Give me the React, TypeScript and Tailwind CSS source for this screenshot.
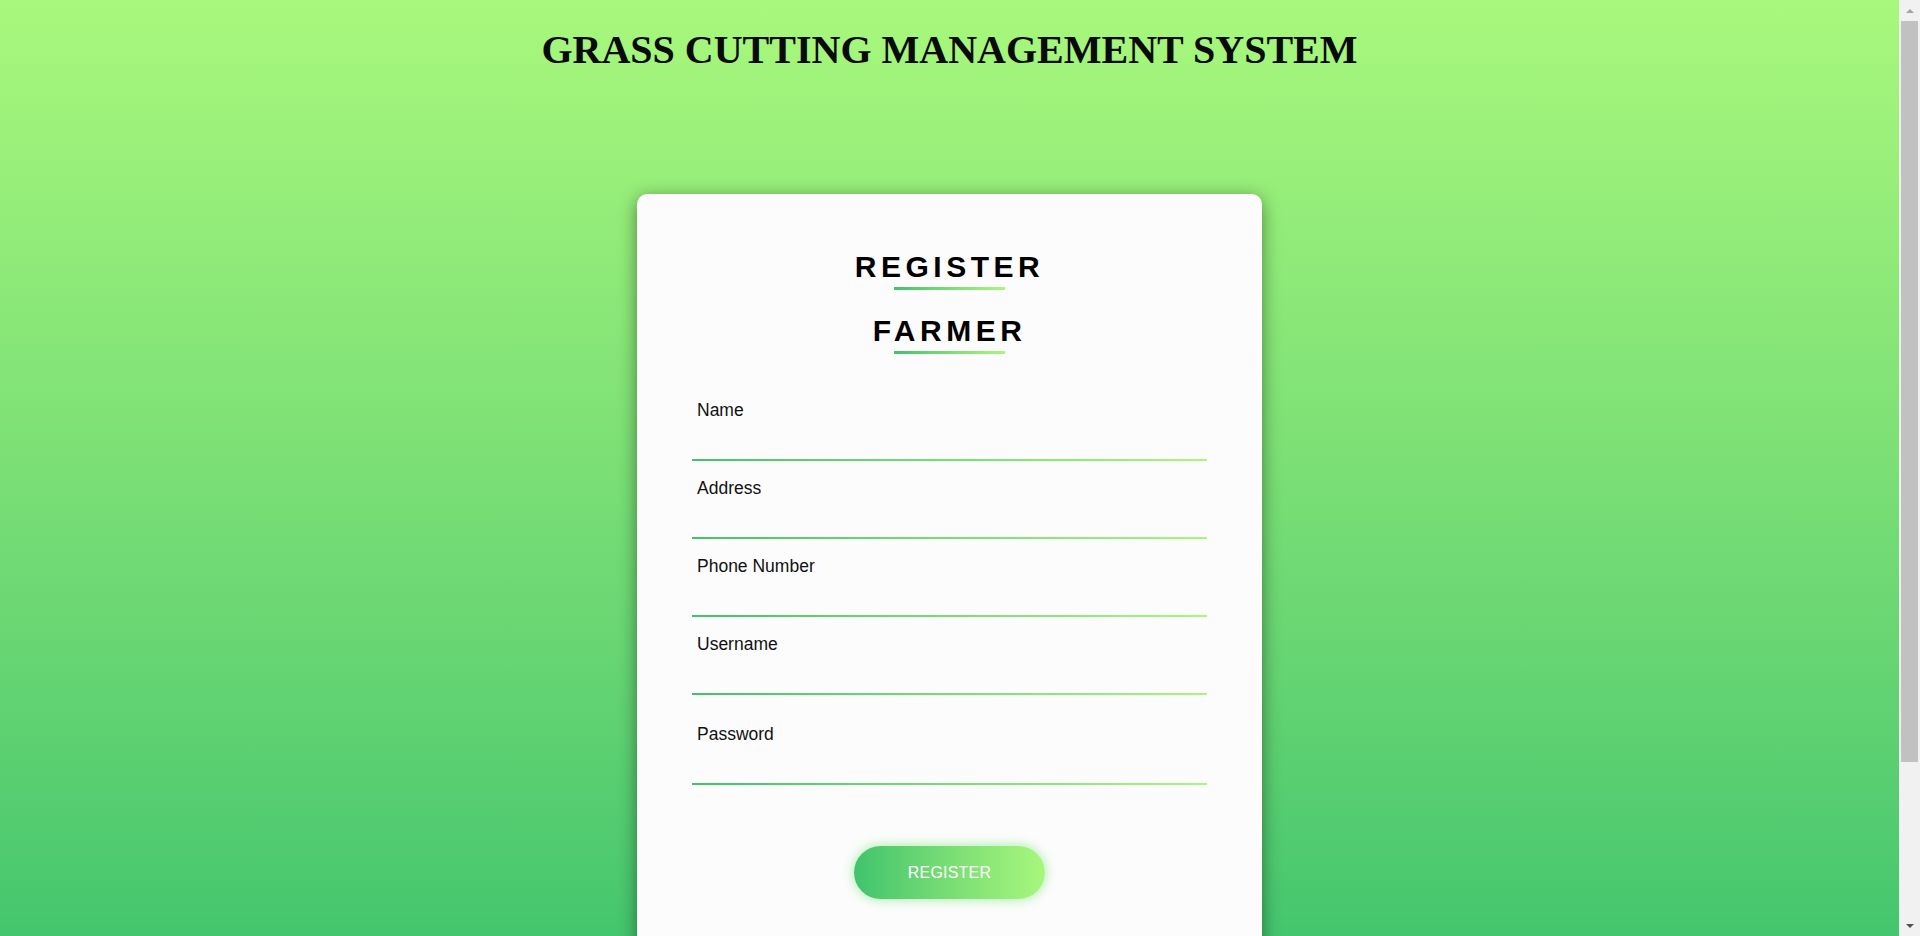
import React from "react";

const fields = ["Name", "Address", "Phone Number", "Username"];

function Field({ label, type = "text", className = "" }: { label: string; type?: string; className?: string }) {
  return (
    <div className={className}>
      <label className="block pl-[5px] text-[17.5px] leading-[20px] text-[#111]">{label}</label>
      <input
        type={type}
        className="block h-[39px] w-full bg-transparent px-[5px] text-[16px] outline-none"
      />
      <div className="h-[2px] w-full bg-linear-to-r from-[#3ec46d] to-[#a8f77c]" />
    </div>
  );
}

function Heading({ children, className = "" }: { children: React.ReactNode; className?: string }) {
  return (
    <div className={className}>
      <h2 className="text-center text-[30px] font-bold leading-[34px] tracking-[0.15em] text-black">
        {children}
      </h2>
      <div className="mx-auto mt-[3px] h-[3px] w-[111px] bg-linear-to-r from-[#3ec46d] to-[#a8f77c]" />
    </div>
  );
}

// browser-style scrollbar strip, as in the screenshot
function ScrollBar() {
  return (
    <div className="fixed right-0 top-0 flex h-screen w-[21px] flex-col items-center bg-[#f1f1f1]">
      <div className="flex h-[21px] w-full items-center justify-center">
        <div className="h-0 w-0 border-x-[4px] border-b-[4px] border-x-transparent border-b-[#a3a3a3]" />
      </div>
      <div className="h-[741px] w-[17px] bg-[#c1c1c1]" />
      <div className="flex-1" />
      <div className="flex h-[21px] w-full items-center justify-center">
        <div className="h-0 w-0 border-x-[4px] border-t-[4px] border-x-transparent border-t-[#505050]" />
      </div>
    </div>
  );
}

export default function App() {
  return (
    <div className="min-h-screen bg-linear-to-b from-[#a8f87c] to-[#44c66e] bg-fixed pb-[185px] pr-[21px] font-['Liberation_Sans',Arial,sans-serif]">
      <h1 className="pt-[27px] text-center font-['Liberation_Serif','Times_New_Roman',serif] text-[40px] font-bold leading-[46px] text-[#0a0a0a]">
        GRASS CUTTING MANAGEMENT SYSTEM
      </h1>

      <div className="mx-auto mt-[121px] w-[625px] rounded-[10px] bg-[#fcfcfc] px-[55px] pb-[55px] pt-[56px] shadow-[0_4px_18px_rgba(0,0,0,0.45)]">
        <Heading>REGISTER</Heading>
        <Heading className="mt-[24px]">FARMER</Heading>

        <form className="mt-[46px] flex flex-col gap-[17px]" onSubmit={(e) => e.preventDefault()}>
          {fields.map((f) => (
            <Field key={f} label={f} />
          ))}
          <Field label="Password" type="password" className="mt-[12px]" />

          <div className="mt-[44px] flex justify-center">
            <button
              type="submit"
              className="h-[53px] w-[191px] rounded-full bg-linear-to-r from-[#3ec46d] to-[#a8f77c] text-[16px] tracking-[0.2px] text-white shadow-[0_0_12px_rgba(120,230,120,0.7)]"
            >
              REGISTER
            </button>
          </div>
        </form>
      </div>

      <ScrollBar />
    </div>
  );
}
